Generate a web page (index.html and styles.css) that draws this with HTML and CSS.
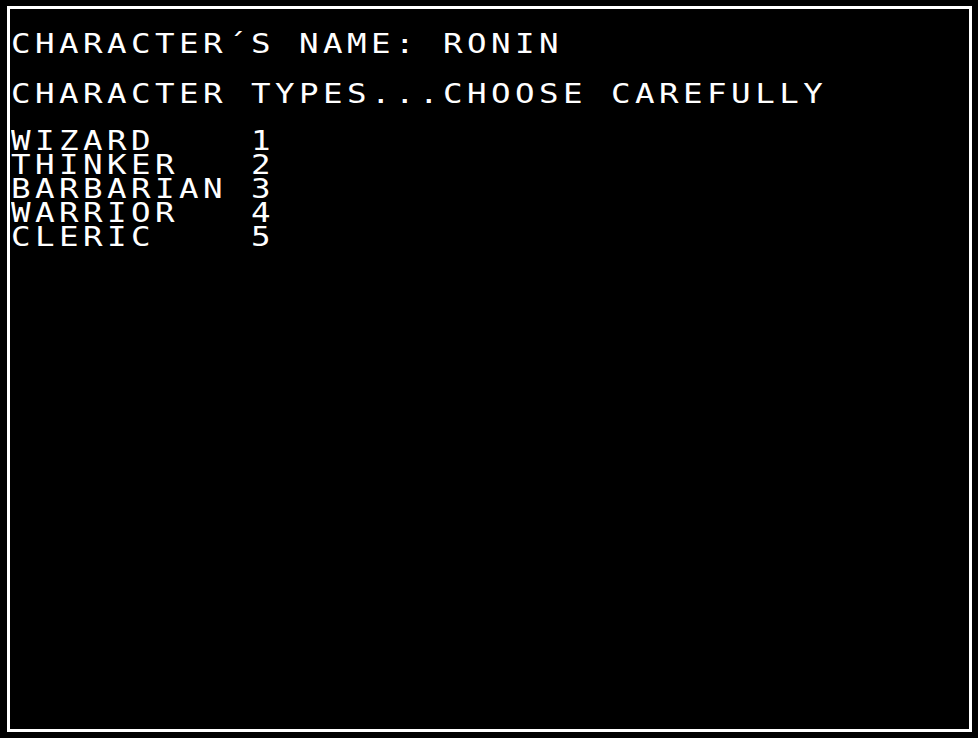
FILE: index.html
```html
<!DOCTYPE html>
<html>
<head>
<meta charset="utf-8">
<link rel="stylesheet" href="styles.css">
</head>
<body>
<div class="screen">
  <div class="line first">CHARACTER´S NAME: RONIN</div>
  <div class="line second">CHARACTER TYPES...CHOOSE CAREFULLY</div>
  <div class="menu">
    <div class="line">WIZARD    1</div>
    <div class="line">THINKER   2</div>
    <div class="line">BARBARIAN 3</div>
    <div class="line">WARRIOR   4</div>
    <div class="line">CLERIC    5</div>
  </div>
</div>
</body>
</html>
```
FILE: styles.css
```css
html, body {
  margin: 0;
  padding: 0;
  background: #000;
}
body {
  width: 978px;
  height: 738px;
  overflow: hidden;
}
.screen {
  box-sizing: border-box;
  margin: 6px 0 0 7px;
  width: 965px;
  height: 726px;
  border: 3px solid #fff;
  background: #000;
  color: #fff;
  font-family: "DejaVu Sans Mono", "Liberation Mono", monospace;
  font-size: 26px;
  line-height: 24px;
  letter-spacing: 3.55px;
  padding: 23px 0 0 1px;
  overflow: hidden;
}
.line {
  white-space: pre;
  width: fit-content;
  height: 24px;
  transform: scaleX(1.25);
  transform-origin: 0 0;
}
.second {
  margin-top: 26px;
}
.menu {
  margin-top: 23px;
}
```
